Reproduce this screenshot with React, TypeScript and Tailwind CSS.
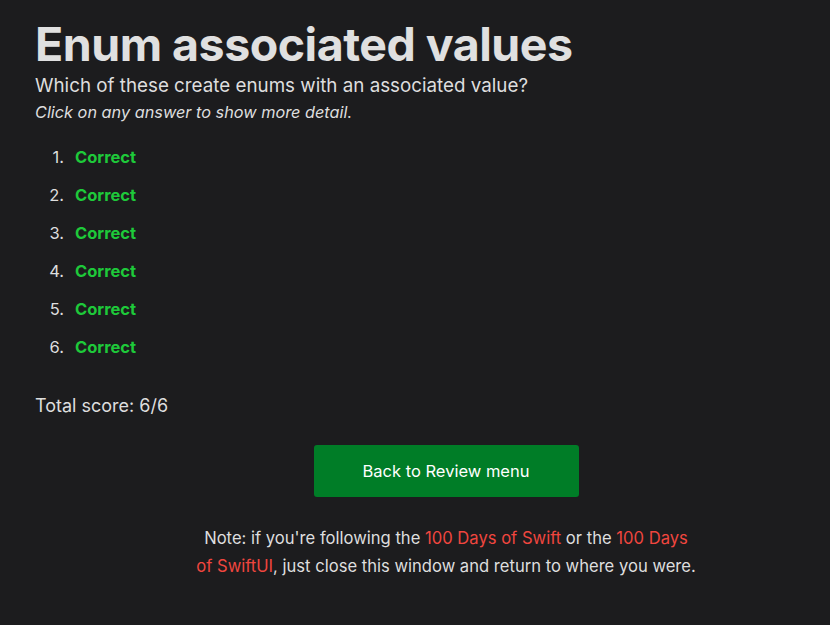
const items = [1, 2, 3, 4, 5, 6];

export default function App() {
  return (
    <div
      className="min-h-[625px] w-full bg-[#1c1c1e] text-[#dedede] px-[35px] pt-[14px]"
      style={{ fontFamily: "Inter, 'Noto Sans', sans-serif" }}
    >
      {/* Header */}
      <h1 className="text-[46.5px] font-bold leading-[60px] tracking-[-0.5px] text-[#e0e0e0]">Enum associated values</h1>
      <p className="text-[18.8px] leading-[24px]">Which of these create enums with an associated value?</p>
      <p className="text-[16.3px] italic leading-[24px] mt-[2px]">Click on any answer to show more detail.</p>

      {/* Answers */}
      <ol className="mt-[21px] flex flex-col gap-[14px]">
        {items.map((n) => (
          <li key={n} className="flex items-center text-[16.5px] leading-[24px]">
            <span className="w-[40px] text-right pr-[11px]">{n}.</span>
            <span className="font-bold text-[#1ec93a]">Correct</span>
          </li>
        ))}
      </ol>

      <p className="text-[18px] leading-[24px] mt-[35px]">Total score: 6/6</p>

      {/* Footer */}
      <div className="w-[822px] flex flex-col items-center">
        <button className="mt-[27px] w-[265px] h-[52px] rounded-[3px] bg-[#007d27] text-white text-[16.5px]">
          Back to Review menu
        </button>
        <p className="mt-[27px] w-[502px] text-center text-[16.6px] leading-[28px]">
          Note: if you're following the <span className="text-[#f0463f]">100 Days of Swift</span> or the{" "}
          <span className="text-[#f0463f]">100 Days of SwiftUI</span>, just close this window and return to where you were.
        </p>
      </div>
    </div>
  );
}
